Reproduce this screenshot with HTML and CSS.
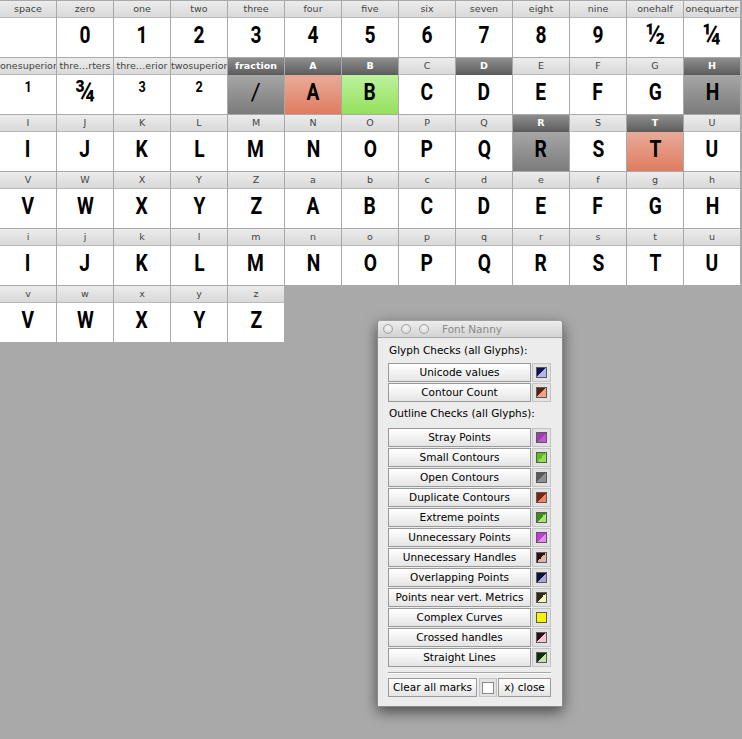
FILE: index.html
```html
<!DOCTYPE html>
<html>
<head>
<meta charset="utf-8">
<title>Font Nanny</title>
<link rel="stylesheet" href="styles.css">
</head>
<body>
<div class="grid">
  <div class="cell"><div class="lbl">space</div><div class="g"></div></div>
  <div class="cell"><div class="lbl">zero</div><div class="g"><span>0</span></div></div>
  <div class="cell"><div class="lbl">one</div><div class="g"><span>1</span></div></div>
  <div class="cell"><div class="lbl">two</div><div class="g"><span>2</span></div></div>
  <div class="cell"><div class="lbl">three</div><div class="g"><span>3</span></div></div>
  <div class="cell"><div class="lbl">four</div><div class="g"><span>4</span></div></div>
  <div class="cell"><div class="lbl">five</div><div class="g"><span>5</span></div></div>
  <div class="cell"><div class="lbl">six</div><div class="g"><span>6</span></div></div>
  <div class="cell"><div class="lbl">seven</div><div class="g"><span>7</span></div></div>
  <div class="cell"><div class="lbl">eight</div><div class="g"><span>8</span></div></div>
  <div class="cell"><div class="lbl">nine</div><div class="g"><span>9</span></div></div>
  <div class="cell"><div class="lbl">onehalf</div><div class="g"><span class="fr">½</span></div></div>
  <div class="cell"><div class="lbl">onequarter</div><div class="g"><span class="fr">¼</span></div></div>

  <div class="cell"><div class="lbl">onesuperior</div><div class="g"><span class="sup">1</span></div></div>
  <div class="cell"><div class="lbl">thre…rters</div><div class="g"><span class="fr">¾</span></div></div>
  <div class="cell"><div class="lbl">thre…erior</div><div class="g"><span class="sup">3</span></div></div>
  <div class="cell"><div class="lbl">twosuperior</div><div class="g"><span class="sup">2</span></div></div>
  <div class="cell sel gray"><div class="lbl">fraction</div><div class="g"><span class="slash">/</span></div></div>
  <div class="cell sel red"><div class="lbl">A</div><div class="g"><span>A</span></div></div>
  <div class="cell sel green"><div class="lbl">B</div><div class="g"><span>B</span></div></div>
  <div class="cell"><div class="lbl">C</div><div class="g"><span>C</span></div></div>
  <div class="cell sel"><div class="lbl">D</div><div class="g"><span>D</span></div></div>
  <div class="cell"><div class="lbl">E</div><div class="g"><span>E</span></div></div>
  <div class="cell"><div class="lbl">F</div><div class="g"><span>F</span></div></div>
  <div class="cell"><div class="lbl">G</div><div class="g"><span>G</span></div></div>
  <div class="cell sel gray"><div class="lbl">H</div><div class="g"><span>H</span></div></div>

  <div class="cell"><div class="lbl">I</div><div class="g"><span>I</span></div></div>
  <div class="cell"><div class="lbl">J</div><div class="g"><span>J</span></div></div>
  <div class="cell"><div class="lbl">K</div><div class="g"><span>K</span></div></div>
  <div class="cell"><div class="lbl">L</div><div class="g"><span>L</span></div></div>
  <div class="cell"><div class="lbl">M</div><div class="g"><span>M</span></div></div>
  <div class="cell"><div class="lbl">N</div><div class="g"><span>N</span></div></div>
  <div class="cell"><div class="lbl">O</div><div class="g"><span>O</span></div></div>
  <div class="cell"><div class="lbl">P</div><div class="g"><span>P</span></div></div>
  <div class="cell"><div class="lbl">Q</div><div class="g"><span>Q</span></div></div>
  <div class="cell sel gray"><div class="lbl">R</div><div class="g"><span>R</span></div></div>
  <div class="cell"><div class="lbl">S</div><div class="g"><span>S</span></div></div>
  <div class="cell sel red"><div class="lbl">T</div><div class="g"><span>T</span></div></div>
  <div class="cell"><div class="lbl">U</div><div class="g"><span>U</span></div></div>

  <div class="cell"><div class="lbl">V</div><div class="g"><span>V</span></div></div>
  <div class="cell"><div class="lbl">W</div><div class="g"><span>W</span></div></div>
  <div class="cell"><div class="lbl">X</div><div class="g"><span>X</span></div></div>
  <div class="cell"><div class="lbl">Y</div><div class="g"><span>Y</span></div></div>
  <div class="cell"><div class="lbl">Z</div><div class="g"><span>Z</span></div></div>
  <div class="cell"><div class="lbl">a</div><div class="g"><span>A</span></div></div>
  <div class="cell"><div class="lbl">b</div><div class="g"><span>B</span></div></div>
  <div class="cell"><div class="lbl">c</div><div class="g"><span>C</span></div></div>
  <div class="cell"><div class="lbl">d</div><div class="g"><span>D</span></div></div>
  <div class="cell"><div class="lbl">e</div><div class="g"><span>E</span></div></div>
  <div class="cell"><div class="lbl">f</div><div class="g"><span>F</span></div></div>
  <div class="cell"><div class="lbl">g</div><div class="g"><span>G</span></div></div>
  <div class="cell"><div class="lbl">h</div><div class="g"><span>H</span></div></div>

  <div class="cell"><div class="lbl">i</div><div class="g"><span>I</span></div></div>
  <div class="cell"><div class="lbl">j</div><div class="g"><span>J</span></div></div>
  <div class="cell"><div class="lbl">k</div><div class="g"><span>K</span></div></div>
  <div class="cell"><div class="lbl">l</div><div class="g"><span>L</span></div></div>
  <div class="cell"><div class="lbl">m</div><div class="g"><span>M</span></div></div>
  <div class="cell"><div class="lbl">n</div><div class="g"><span>N</span></div></div>
  <div class="cell"><div class="lbl">o</div><div class="g"><span>O</span></div></div>
  <div class="cell"><div class="lbl">p</div><div class="g"><span>P</span></div></div>
  <div class="cell"><div class="lbl">q</div><div class="g"><span>Q</span></div></div>
  <div class="cell"><div class="lbl">r</div><div class="g"><span>R</span></div></div>
  <div class="cell"><div class="lbl">s</div><div class="g"><span>S</span></div></div>
  <div class="cell"><div class="lbl">t</div><div class="g"><span>T</span></div></div>
  <div class="cell"><div class="lbl">u</div><div class="g"><span>U</span></div></div>

  <div class="cell"><div class="lbl">v</div><div class="g"><span>V</span></div></div>
  <div class="cell"><div class="lbl">w</div><div class="g"><span>W</span></div></div>
  <div class="cell"><div class="lbl">x</div><div class="g"><span>X</span></div></div>
  <div class="cell"><div class="lbl">y</div><div class="g"><span>Y</span></div></div>
  <div class="cell"><div class="lbl">z</div><div class="g"><span>Z</span></div></div>
</div>

<div class="win">
  <div class="titlebar">
    <span class="dot"></span><span class="dot"></span><span class="dot"></span>
    <span class="title">Font Nanny</span>
  </div>
  <div class="wbody">
    <div class="sect">Glyph Checks (all Glyphs):</div>
    <div class="list">
      <div class="row"><div class="btn">Unicode values</div><div class="sw"><span class="chip c1"></span></div></div>
      <div class="row"><div class="btn">Contour Count</div><div class="sw"><span class="chip c2"></span></div></div>
    </div>
    <div class="sect sect2">Outline Checks (all Glyphs):</div>
    <div class="list">
      <div class="row"><div class="btn">Stray Points</div><div class="sw"><span class="chip c3"></span></div></div>
      <div class="row"><div class="btn">Small Contours</div><div class="sw"><span class="chip c4"></span></div></div>
      <div class="row"><div class="btn">Open Contours</div><div class="sw"><span class="chip c5"></span></div></div>
      <div class="row"><div class="btn">Duplicate Contours</div><div class="sw"><span class="chip c6"></span></div></div>
      <div class="row"><div class="btn">Extreme points</div><div class="sw"><span class="chip c7"></span></div></div>
      <div class="row"><div class="btn">Unnecessary Points</div><div class="sw"><span class="chip c8"></span></div></div>
      <div class="row"><div class="btn">Unnecessary Handles</div><div class="sw"><span class="chip c9"></span></div></div>
      <div class="row"><div class="btn">Overlapping Points</div><div class="sw"><span class="chip c10"></span></div></div>
      <div class="row"><div class="btn">Points near vert. Metrics</div><div class="sw"><span class="chip c11"></span></div></div>
      <div class="row"><div class="btn">Complex Curves</div><div class="sw"><span class="chip c12"></span></div></div>
      <div class="row"><div class="btn">Crossed handles</div><div class="sw"><span class="chip c13"></span></div></div>
      <div class="row"><div class="btn">Straight Lines</div><div class="sw"><span class="chip c14"></span></div></div>
    </div>
    <div class="sep"></div>
    <div class="bottom">
      <div class="btn clear">Clear all marks</div>
      <div class="sw cbox"><span class="check"></span></div>
      <div class="btn close">x) close</div>
    </div>
  </div>
</div>
</body>
</html>
```

FILE: styles.css
```css
html, body {
  margin: 0;
  padding: 0;
}
body {
  background: #a9a9a9;
  width: 742px;
  height: 739px;
  overflow: hidden;
  position: relative;
  font-family: "DejaVu Sans", sans-serif;
}

.grid {
  display: grid;
  grid-template-columns: repeat(13, 56px);
  grid-auto-rows: 56px;
  gap: 1px;
  padding-top: 1px;
}

.cell {
  display: flex;
  flex-direction: column;
  background: #fff;
  overflow: hidden;
}

.lbl {
  height: 16px;
  flex: none;
  border-bottom: 1px solid #b9b9b9;
  background: linear-gradient(#ececec, #d9d9d9);
  color: #444;
  font-family: "DejaVu Sans", sans-serif;
  font-size: 9.5px;
  line-height: 16px;
  text-align: center;
  white-space: nowrap;
  overflow: hidden;
}

.g {
  flex: 1;
  display: flex;
  justify-content: center;
  align-items: center;
  padding-bottom: 5px;
  font-family: Roboto, "DejaVu Sans", sans-serif;
  font-weight: bold;
  font-size: 24px;
  line-height: 1;
  color: #000;
}
.g span {
  display: inline-block;
  transform: scaleX(0.8);
}

.g .sup {
  font-size: 14px;
  padding-bottom: 10px;
  transform: scaleX(0.9);
}
.g .fr {
  font-size: 30px;
  padding-bottom: 2px;
  transform: scaleX(0.85);
}
.g .slash {
  font-weight: 500;
  transform: scaleX(0.8) skewX(-8deg);
}

.sel .lbl {
  background: linear-gradient(#8e8e8e, #5f5f5f);
  border-bottom-color: #5a5a5a;
  color: #fff;
  font-weight: bold;
}
.gray .g {
  background: linear-gradient(#a6a6a6, #7b7b7b);
}
.red .g {
  background: linear-gradient(#e9ab9a, #e07c5f);
}
.green .g {
  background: linear-gradient(#bcf29e, #95e05c);
}

/* window */
.win {
  position: absolute;
  left: 377px;
  top: 320px;
  width: 186px;
  height: 387px;
  background: #ececec;
  border: 1px solid #8c8c8c;
  border-top-color: #a0a0a0;
  border-radius: 4px 4px 0 0;
  box-shadow: 0 5px 14px rgba(0, 0, 0, 0.55);
  box-sizing: border-box;
  font-family: "DejaVu Sans", sans-serif;
  font-size: 10.5px;
  color: #000;
}

.titlebar {
  height: 16px;
  background: linear-gradient(#ededed, #d3d3d3);
  border-bottom: 1px solid #a6a6a6;
  border-radius: 3px 3px 0 0;
  display: flex;
  align-items: center;
  padding-left: 5px;
}
.dot {
  width: 10px;
  height: 10px;
  border-radius: 50%;
  box-sizing: border-box;
  border: 1px solid #a4a4a4;
  background: radial-gradient(circle at 50% 35%, #f6f6f6, #d0d0d0);
  margin-right: 8px;
}
.title {
  margin-left: 5px;
  color: #8a8a8a;
  font-size: 10.5px;
}

.wbody {
  padding: 5px 11px 0 10px;
}

.sect {
  height: 15px;
  line-height: 15px;
  margin-bottom: 5px;
  padding-left: 1px;
}
.sect2 {
  margin-top: 4px;
  margin-bottom: 7px;
}

.list {
  display: flex;
  flex-direction: column;
  gap: 1px;
}
.row {
  display: flex;
  gap: 1px;
  height: 19px;
}
.btn {
  flex: 1;
  box-sizing: border-box;
  border: 1px solid #9a9a9a;
  background: linear-gradient(#ffffff, #f1f1f1 55%, #e4e4e4);
  text-align: center;
  line-height: 17px;
  white-space: nowrap;
}
.sw {
  width: 19px;
  flex: none;
  box-sizing: border-box;
  border: 1px solid #c4c4c4;
  background: #e2e2e2;
  display: flex;
  align-items: center;
  justify-content: center;
}
.chip {
  width: 11px;
  height: 11px;
  box-sizing: border-box;
  border: 1px solid #5a5a5a;
}
.c1 { background: linear-gradient(135deg, #12124e 50%, #b4b4f2 50%); }
.c2 { background: linear-gradient(135deg, #5e2010 50%, #f2a48a 50%); }
.c3 { background: linear-gradient(135deg, #a03ab2 50%, #bf58cf 50%); }
.c4 { background: linear-gradient(135deg, #5cbc1c 50%, #8ee04e 50%); }
.c5 { background: linear-gradient(135deg, #5a5a5a 50%, #909090 50%); }
.c6 { background: linear-gradient(135deg, #7c2210 50%, #ee8462 50%); }
.c7 { background: linear-gradient(135deg, #3e8c1e 50%, #a6e672 50%); }
.c8 { background: linear-gradient(135deg, #bf3cd0 50%, #e48af2 50%); }
.c9 { background: linear-gradient(135deg, #2e0e0e 50%, #d6b8aa 50%); }
.c10 { background: linear-gradient(135deg, #0e0e3c 50%, #a8a8d8 50%); }
.c11 { background: linear-gradient(135deg, #2c2c0e 50%, #f6f4c4 50%); }
.c12 { background: #f5f500; }
.c13 { background: linear-gradient(135deg, #2e0e1c 50%, #f4c6d4 50%); }
.c14 { background: linear-gradient(135deg, #0e2c0e 50%, #c2e2b0 50%); }

.sep {
  margin-top: 5px;
  height: 1px;
  background: #a8a8a8;
  border-bottom: 1px solid #fafafa;
}

.bottom {
  display: flex;
  gap: 1px;
  height: 19px;
  margin-top: 4px;
}
.clear {
  flex: none;
  width: 89px;
}
.cbox {
  width: 18px;
  margin-left: 1px;
}
.check {
  width: 12px;
  height: 12px;
  box-sizing: border-box;
  border: 1px solid #8a8a8a;
  background: #fff;
}
.close {
  flex: 1;
}
```
